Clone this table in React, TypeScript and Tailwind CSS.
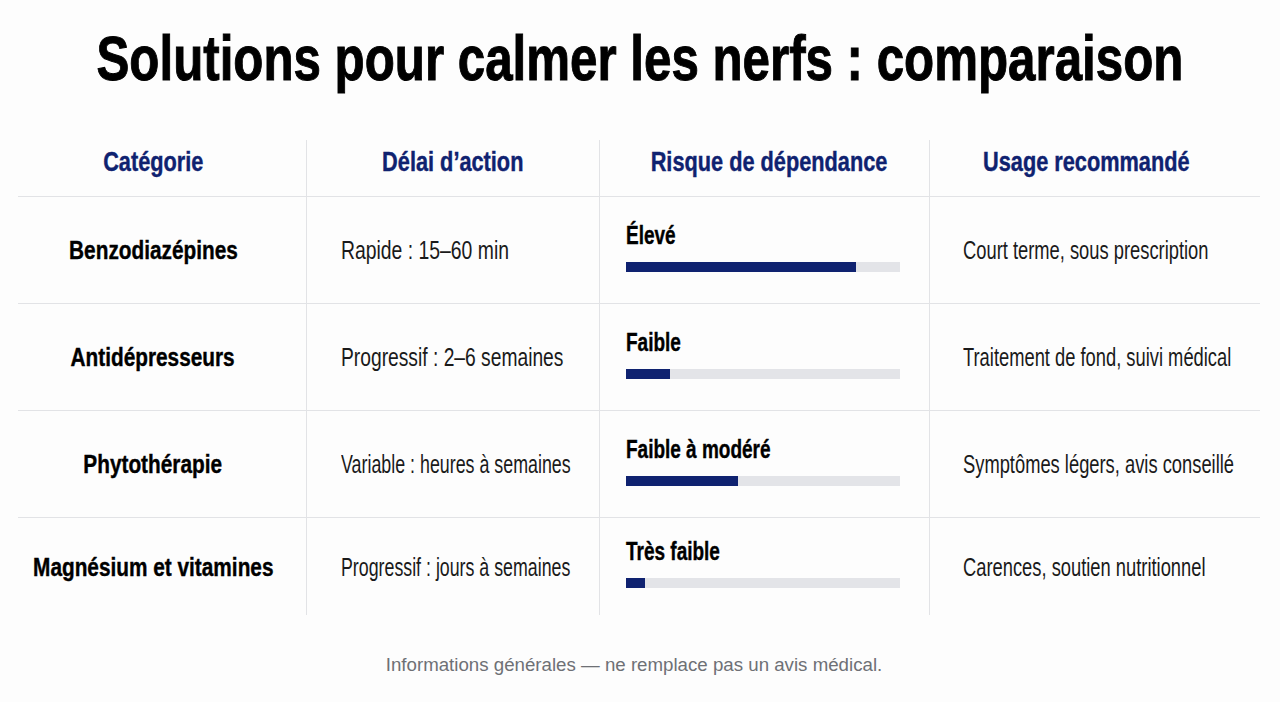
import React from 'react';

const font = { fontFamily: '"Liberation Sans", Arial, sans-serif' };

interface Row {
  category: string;
  delay: string;
  delayFit: string;
  risk: string;
  level: number;
  usage: string;
}

const rows: Row[] = [
  { category: 'Benzodiazépines', delay: 'Rapide : 15–60 min', delayFit: 'scale-x-[0.745]', risk: 'Élevé', level: 84, usage: 'Court terme, sous prescription' },
  { category: 'Antidépresseurs', delay: 'Progressif : 2–6 semaines', delayFit: 'scale-x-[0.74]', risk: 'Faible', level: 16, usage: 'Traitement de fond, suivi médical' },
  { category: 'Phytothérapie', delay: 'Variable : heures à semaines', delayFit: 'scale-x-[0.686]', risk: 'Faible à modéré', level: 41, usage: 'Symptômes légers, avis conseillé' },
  { category: 'Magnésium et vitamines', delay: 'Progressif : jours à semaines', delayFit: 'scale-x-[0.684]', risk: 'Très faible', level: 7, usage: 'Carences, soutien nutritionnel' },
];

const headers = [
  { label: 'Catégorie', cls: 'pr-[18px] border-r' },
  { label: 'Délai d’action', cls: 'border-r' },
  { label: 'Risque de dépendance', cls: 'pl-[9px] border-r' },
  { label: 'Usage recommandé', cls: 'pr-[18px]' },
];

const heavy = '[-webkit-text-stroke:0.4px_currentColor]';

const App = () => {
  return (
    <div className="w-[1280px] h-[702px] bg-[#fdfdfd] text-black overflow-hidden" style={font}>
      <h1 className="pt-[28px] flex justify-center text-[63px] leading-[60px] font-bold [-webkit-text-stroke:1px_black]">
        <span className="inline-block whitespace-nowrap scale-x-[0.782]">
          Solutions pour calmer les nerfs : comparaison
        </span>
      </h1>

      <div className="mt-[52px] ml-[18px] w-[1242px] grid grid-cols-[289px_293px_330px_330px]">
        {headers.map((h) => (
          <div
            key={h.label}
            className={`h-[57px] flex justify-center pt-[6px] text-[27px] leading-[32px] font-bold text-[#0f2270] border-b border-[#e2e3e6] ${heavy} ${h.cls}`}
          >
            <span className="inline-block whitespace-nowrap scale-x-[0.805]">{h.label}</span>
          </div>
        ))}

        {rows.map((r, idx) => {
          const last = idx === rows.length - 1;
          const rowCls = last ? 'h-[97px]' : 'h-[107px] border-b border-[#e2e3e6]';
          return (
            <React.Fragment key={r.category}>
              <div className={`${rowCls} border-r border-[#e2e3e6] flex items-center justify-center pr-[18px] text-[26px] leading-[30px] font-bold ${heavy}`}>
                <span className="inline-block whitespace-nowrap scale-x-[0.8]">{r.category}</span>
              </div>
              <div className={`${rowCls} border-r border-[#e2e3e6] flex items-center pl-[34px] text-[26px] leading-[30px] text-[#1a1a1a]`}>
                <span className={`inline-block whitespace-nowrap origin-left ${r.delayFit}`}>{r.delay}</span>
              </div>
              <div className={`${rowCls} border-r border-[#e2e3e6] flex flex-col justify-center pl-[26px] pr-[29px] pb-[9px]`}>
                <div className={`text-[26px] leading-[30px] font-bold ${heavy}`}>
                  <span className="inline-block whitespace-nowrap origin-left scale-x-[0.73]">{r.risk}</span>
                </div>
                <div className="mt-[12px] h-[10px] bg-[#e3e4e8]">
                  <div className="h-full bg-[#0f2270]" style={{ width: `${r.level}%` }} />
                </div>
              </div>
              <div className={`${rowCls} flex items-center pl-[33px] text-[26px] leading-[30px] text-[#1a1a1a]`}>
                <span className="inline-block whitespace-nowrap origin-left scale-x-[0.705]">{r.usage}</span>
              </div>
            </React.Fragment>
          );
        })}
      </div>

      <p className="mt-[39px] pr-[12px] text-center text-[18.7px] leading-[22px] text-[#6e7075]">
        Informations générales — ne remplace pas un avis médical.
      </p>
    </div>
  );
};

export default App;
